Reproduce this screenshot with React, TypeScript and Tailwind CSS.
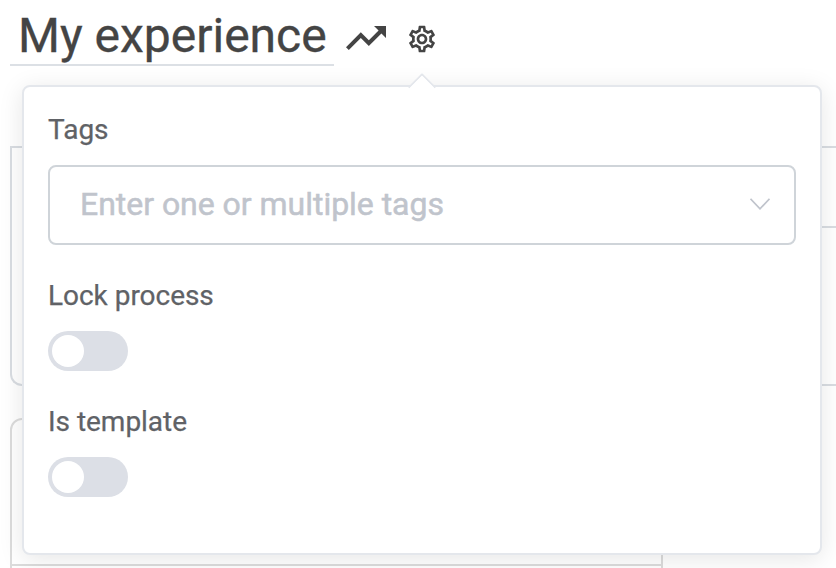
import { MdOutlineSettings, MdTrendingUp } from "react-icons/md";

function Toggle({ label }: { label: string }) {
  return (
    <div className="flex flex-col items-start">
      <span className="h-[42px] text-[28px] leading-[42px] tracking-[-0.03px] whitespace-nowrap [-webkit-text-stroke:0.25px_#606266]">{label}</span>
      <button
        role="switch"
        aria-checked={false}
        aria-label={label}
        className="mt-[14px] flex h-10 w-20 items-center rounded-full bg-[#dcdfe6] pl-1"
      >
        <span className="size-8 rounded-full bg-white" />
      </button>
    </div>
  );
}

function SettingsPopover() {
  return (
    <div className="absolute top-[85px] left-[22px] flex h-[470px] w-[800px] flex-col rounded-lg border-2 border-[#e4e7ec] bg-white px-6 pt-[22px] text-[#606266] shadow-[0_4px_24px_rgba(0,0,0,0.1)]">
      <span className="absolute -top-[10px] left-[388px] size-5 rotate-45 rounded-tl-[2px] border-t-2 border-l-2 border-[#e4e7ec] bg-white" />
      <span className="h-[42px] text-[28px] leading-[42px] [-webkit-text-stroke:0.25px_#606266]">Tags</span>
      <div className="mt-[14px] flex h-20 shrink-0 items-center justify-between rounded-lg border-2 border-[#cfd4d9] pr-6 pb-px pl-[30px]">
        <span className="mb-px text-[32px] leading-[38px] tracking-[-0.03px] text-[#c0c4cc] [-webkit-text-stroke:0.5px_#c0c4cc]">
          Enter one or multiple tags
        </span>
        <svg width="20" height="12" viewBox="0 0 20 12" fill="none" stroke="#c0c4cc" strokeWidth="1.7" className="mb-px">
          <path d="M0.5 0.8 10 10.8 19.5 0.8" />
        </svg>
      </div>
      <div className="mt-[30px] flex flex-col gap-[30px]">
        <Toggle label="Lock process" />
        <Toggle label="Is template" />
      </div>
    </div>
  );
}

export default function App() {
  return (
    <div className="relative h-[568px] w-[836px] overflow-hidden bg-white font-[Roboto,sans-serif]">
      <header className="flex h-[66px] items-start pl-[10px] text-[#444]">
        <h1 className="h-[66px] w-[324px] border-b-2 border-[#dce0e5] pt-[8px] pl-2 text-[48px] leading-[56px] whitespace-nowrap [-webkit-text-stroke:0.35px_#444]">
          My experience
        </h1>
        <MdTrendingUp className="mt-[14px] ml-2 size-12 shrink-0" />
        <MdOutlineSettings className="mt-[23px] ml-4 size-8 shrink-0" />
      </header>
      <main className="flex flex-col gap-8 pt-20 pl-[10px]">
        <section className="h-[240px] rounded-bl-xl border-y-2 border-l-2 border-[#d9dde2]">
          <div className="ml-10 h-20 border-b-2 border-[#d9dde2]" />
        </section>
        <section className="h-[200px] w-[653px] rounded-t-xl border-2 border-[#dcdcdc]">
          <div className="h-[146px] border-b-2 border-[#dcdcdc]" />
        </section>
      </main>
      <SettingsPopover />
    </div>
  );
}
